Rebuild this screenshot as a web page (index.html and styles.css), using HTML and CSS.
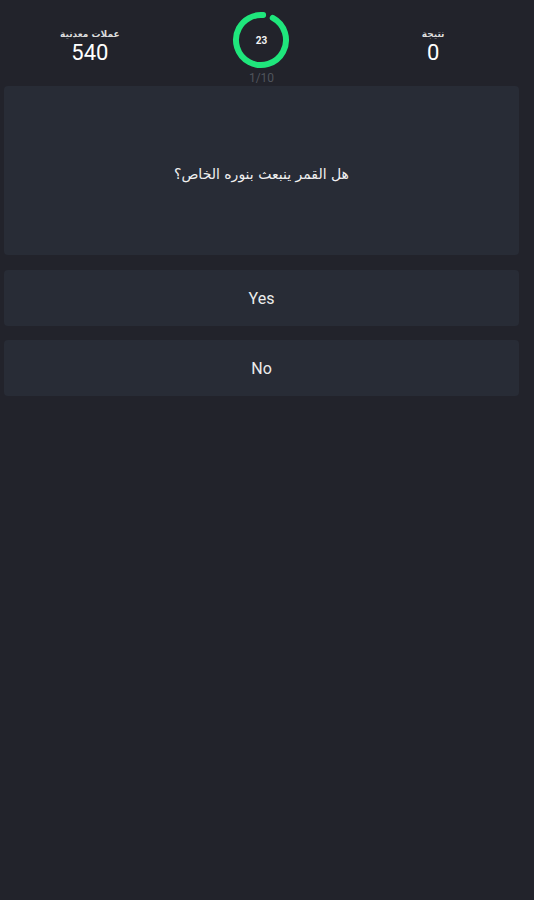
FILE: index.html
```html
<!DOCTYPE html>
<html lang="ar">
<head>
<meta charset="UTF-8" />
<meta name="viewport" content="width=device-width, initial-scale=1" />
<title>Quiz</title>
<link rel="stylesheet" href="styles.css">
</head>
<body>

  <main class="quiz">
    <div class="header">
      <div class="stat">
        <div class="label">عملات معدنية</div>
        <div class="value">540</div>
      </div>

      <div class="timer">
        <div class="ring">
          <svg width="62" height="62" viewBox="0 0 62 62">
            <circle cx="31" cy="31" r="25" fill="none" stroke="#1fe67c" stroke-width="6"
              stroke-linecap="round" stroke-dasharray="146 11" transform="rotate(-62 31 31)" />
          </svg>
          <span class="seconds">23</span>
        </div>
        <div class="count">1/10</div>
      </div>

      <div class="stat">
        <div class="label">نتيجة</div>
        <div class="value">0</div>
      </div>
    </div>

    <div class="question">هل القمر ينبعث بنوره الخاص؟</div>

    <div class="answers">
      <button class="answer">Yes</button>
      <button class="answer">No</button>
    </div>
  </main>

</body>
</html>
```

FILE: styles.css
```css
/* Reset + basic */
* {
  box-sizing: border-box;
}
body {
  margin: 0; padding: 0;
  font-family: Roboto, "DejaVu Sans", sans-serif;
  background: #22232b;
  color: #ececec;
  min-height: 100vh;
}

.quiz {
  width: 515px;
  margin-left: 4px;
}

/* Header */
.header {
  display: grid;
  grid-template-columns: repeat(3, 1fr);
  align-items: start;
  height: 86px;
}
.stat {
  text-align: center;
  padding-top: 29px;
}
.stat .label {
  font-family: "DejaVu Sans", sans-serif;
  font-size: 9px;
  font-weight: bold;
  line-height: 11px;
  color: #dcdcdc;
}
.stat .value {
  font-size: 22px;
  line-height: 25px;
  color: #fff;
}

.timer {
  display: flex;
  flex-direction: column;
  align-items: center;
  padding-top: 9px;
}
.ring {
  position: relative;
  width: 62px;
  height: 62px;
}
.ring svg {
  display: block;
}
.seconds {
  position: absolute;
  inset: 0;
  display: flex;
  align-items: center;
  justify-content: center;
  font-size: 10px;
  font-weight: bold;
  color: #f2f2f2;
}
.count {
  font-size: 12px;
  line-height: 12px;
  color: #50545c;
  margin-top: 1px;
}

/* Question */
.question {
  background: #282c36;
  border-radius: 4px;
  height: 169px;
  display: flex;
  align-items: center;
  justify-content: center;
  font-family: "DejaVu Sans", sans-serif;
  font-size: 14px;
  color: #f0f0f0;
  padding-top: 7px;
}

/* Answers */
.answers {
  display: flex;
  flex-direction: column;
  gap: 14px;
  margin-top: 15px;
}
.answer {
  height: 56px;
  border: none;
  border-radius: 4px;
  background: #282c36;
  color: #ececec;
  font-family: Roboto, sans-serif;
  font-size: 16px;
  cursor: pointer;
}
```
